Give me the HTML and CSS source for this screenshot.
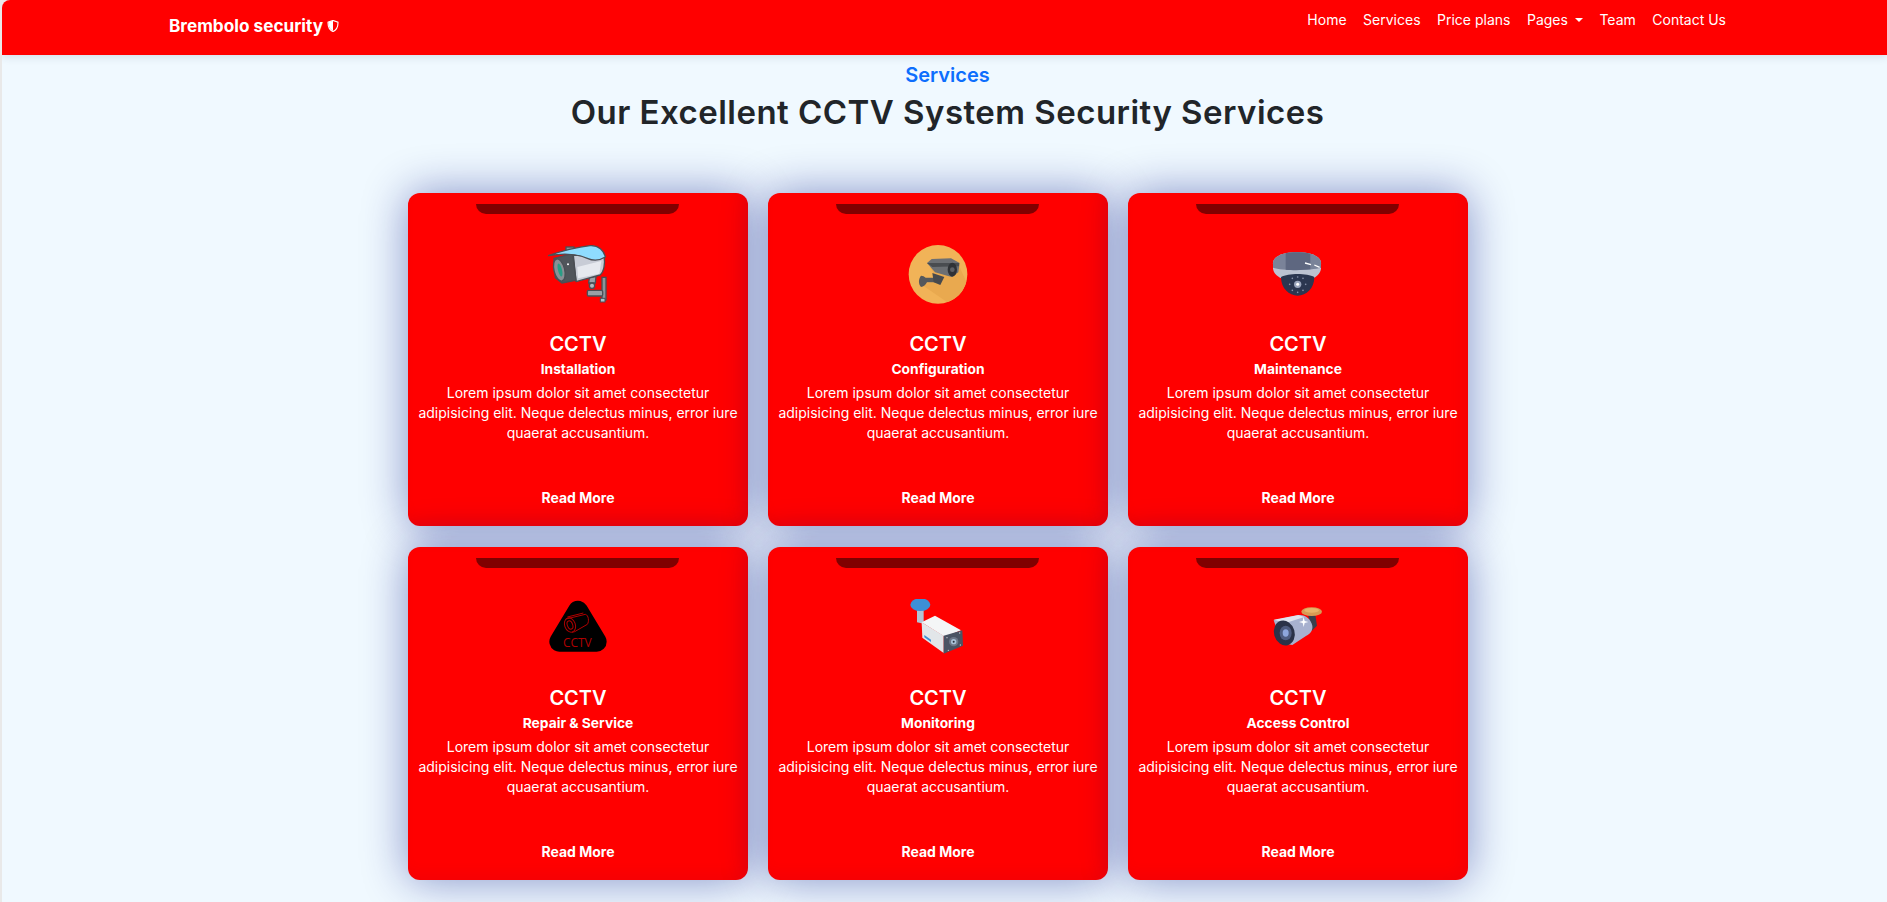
FILE: index.html
```html
<!DOCTYPE html>
<html lang="en">
<head>
<meta charset="utf-8">
<title>Brembolo security</title>
<link rel="stylesheet" href="styles.css">
</head>
<body>
<div class="page">
  <nav class="navbar">
    <a class="brand" href="#">Brembolo security
      <svg class="shield" viewBox="0 0 16 16"><path d="M8 .6 14.600 3c.2 4.800-.8 9.700-6.600 12.400C2.200 12.700 1.200 7.800 1.400 3Z" fill="none" stroke="#fff" stroke-width="1.500"/><path d="M8 1 2 3c0 4.500.8 8.800 6 11.500Z" fill="#fff"/></svg>
    </a>
    <ul class="links">
      <li><a href="#">Home</a></li>
      <li><a href="#">Services</a></li>
      <li><a href="#">Price plans</a></li>
      <li><a href="#">Pages<span class="caret"></span></a></li>
      <li><a href="#">Team</a></li>
      <li><a href="#">Contact Us</a></li>
    </ul>
  </nav>
  <header class="head">
    <h2 class="eyebrow">Services</h2>
    <h1 class="title">Our Excellent CCTV System Security Services</h1>
  </header>
  <main class="grid">
    <article class="card">
      <svg class="icon" viewBox="54 30 180 180">
        <rect x="216" y="127" width="12" height="68" fill="#8d9299" stroke="#4a4f55" stroke-width="4"/>
        <rect x="211" y="190" width="14" height="11" fill="#a8c4d0" stroke="#4a4f55" stroke-width="3"/>
        <rect x="172" y="166" width="46" height="17" rx="4" fill="#9a9fa6" stroke="#4a4f55" stroke-width="4"/>
        <path d="M178 128l-2 16h20l2-20z" fill="#9aa0a8" stroke="#4a4f55" stroke-width="4"/>
        <circle cx="186" cy="152" r="8" fill="#b3b7bd" stroke="#4a4f55" stroke-width="4"/>
        <rect x="108" y="36" width="24" height="14" fill="#8d9299" stroke="#4a4f55" stroke-width="4"/>
        <path d="M130 60 222 62c4 24 0 48-12 58l-72 20z" fill="#c8ccd6" stroke="#4a4f55" stroke-width="4" stroke-linejoin="round"/>
        <path d="M142 96 214 78 208 116 144 130z" fill="#e6e9ef"/>
        <path d="M72 70 128 56 138 136 96 144 76 128z" fill="#50555b" stroke="#4a4f55" stroke-width="4"/>
        <ellipse cx="88" cy="105" rx="16" ry="34" transform="rotate(-14 88 105)" fill="#8a8f95" stroke="#4a4f55" stroke-width="4"/>
        <ellipse cx="90" cy="105" rx="6" ry="20" transform="rotate(-14 90 105)" fill="#2a9d86"/>
        <circle cx="114" cy="88" r="3" fill="#fff"/>
        <path d="M55 62C90 50 130 38 180 32 206 30 222 48 226 66 210 76 190 78 172 70 140 56 100 54 55 62z" fill="#8fdcff" stroke="#4a4f55" stroke-width="4" stroke-linejoin="round"/>
      </svg>
      <h3 class="name">CCTV</h3>
      <h4 class="kind">Installation</h4>
      <p class="text">Lorem ipsum dolor sit amet consectetur adipisicing elit. Neque delectus minus, error iure quaerat accusantium.</p>
      <a class="more" href="#">Read More</a>
    </article>
    <article class="card">
      <svg class="icon" viewBox="39 30 180 180">
        <circle cx="129" cy="118" r="88" fill="#f1b358"/>
        <path d="M108 100 190 88 214 140A88 88 0 0 1 156 201L78 148 128 140z" fill="#e9a94f"/>
        <path d="M78 122c6 0 10 2 14 6h38v14H96c-4 8-10 14-18 14-8-10-8-24 0-34z" fill="#55585c"/>
        <path d="M112 114 148 126 136 150 116 142z" fill="#46494d"/>
        <path d="M96 84 110 72 168 70 194 84 190 112 170 126 120 112z" fill="#6c6f73"/>
        <path d="M96 84 192 84 192 94 112 96z" fill="#494c50"/>
        <ellipse cx="172" cy="104" rx="14" ry="21" fill="#2f3236"/>
        <circle cx="172" cy="104" r="7" fill="#5e6166"/>
      </svg>
      <h3 class="name">CCTV</h3>
      <h4 class="kind">Configuration</h4>
      <p class="text">Lorem ipsum dolor sit amet consectetur adipisicing elit. Neque delectus minus, error iure quaerat accusantium.</p>
      <a class="more" href="#">Read More</a>
    </article>
    <article class="card">
      <svg class="icon" viewBox="39 30 180 180">
        <path d="M54 85C54 65 80 52 126 52 172 52 198 65 198 85V100C198 115 180 130 170 132H86C72 130 54 115 54 100Z" fill="#bcc2d1"/>
        <path d="M54 85C54 65 80 52 126 52 172 52 198 65 198 85V98C170 106 84 108 54 98Z" fill="#7a8399"/>
        <path d="M92 54C110 51 146 51 166 56V103C142 106 112 106 92 104Z" fill="#5e6780"/>
        <path d="M150 84l18 5M178 90l16 7" stroke="#fff" stroke-width="4"/>
        <path d="M78 126C100 114 156 114 178 126 178 160 154 182 128 182 102 182 78 160 78 126Z" fill="#2b3650"/>
        <circle cx="128" cy="148" r="11" fill="#9aa4bc"/>
        <circle cx="128" cy="148" r="4.500" fill="#fff"/>
        <g fill="#8a94ad">
          <circle cx="128" cy="126" r="2.500"/><circle cx="112" cy="130" r="2.500"/><circle cx="144" cy="130" r="2.500"/>
          <circle cx="104" cy="148" r="2.500"/><circle cx="152" cy="148" r="2.500"/><circle cx="112" cy="166" r="2.500"/>
          <circle cx="144" cy="166" r="2.500"/><circle cx="128" cy="172" r="2.500"/>
        </g>
      </svg>
      <h3 class="name">CCTV</h3>
      <h4 class="kind">Maintenance</h4>
      <p class="text">Lorem ipsum dolor sit amet consectetur adipisicing elit. Neque delectus minus, error iure quaerat accusantium.</p>
      <a class="more" href="#">Read More</a>
    </article>
    <article class="card">
      <svg class="icon" viewBox="54 30 180 180">
        <path d="M144 65 88 158H200Z" fill="#000" stroke="#000" stroke-width="60" stroke-linejoin="round"/>
        <g fill="none" stroke="#b00000" stroke-width="3">
          <ellipse cx="120" cy="108" rx="16" ry="22" transform="rotate(-20 120 108)"/>
          <ellipse cx="120" cy="108" rx="8" ry="13" transform="rotate(-20 120 108)"/>
          <path d="M108 90 166 76c10 2 12 22 6 30l-38 22-8 2M112 84 160 72"/>
        </g>
        <text class="icon-label" x="142" y="174" text-anchor="middle">CCTV</text>
      </svg>
      <h3 class="name">CCTV</h3>
      <h4 class="kind">Repair &amp; Service</h4>
      <p class="text">Lorem ipsum dolor sit amet consectetur adipisicing elit. Neque delectus minus, error iure quaerat accusantium.</p>
      <a class="more" href="#">Read More</a>
    </article>
    <article class="card">
      <svg class="icon" viewBox="39 30 180 180">
        <path d="M66 62h20v42l-20-4z" fill="#b4c3d4"/>
        <ellipse cx="76" cy="47" rx="30" ry="19" fill="#3d8fd6"/>
        <path d="M120 80 198 124 150 144 80 100z" fill="#f4f6f7"/>
        <path d="M80 100 146 140 146 192 82 146z" fill="#e2e6e9"/>
        <path d="M88 138l20 14v7l-20-14z" fill="#3d8fd6"/>
        <path d="M146 140 202 124 204 170 146 194z" fill="#4b5464"/>
        <circle cx="176" cy="158" r="14" fill="#6d7788"/>
        <circle cx="176" cy="158" r="8" fill="#a9c2d8"/>
        <circle cx="176" cy="158" r="3" fill="#27303d"/>
        <g fill="#c8ccd4"><circle cx="156" cy="146" r="2"/><circle cx="194" cy="132" r="2"/><circle cx="196" cy="168" r="2"/><circle cx="160" cy="184" r="2"/></g>
      </svg>
      <h3 class="name">CCTV</h3>
      <h4 class="kind">Monitoring</h4>
      <p class="text">Lorem ipsum dolor sit amet consectetur adipisicing elit. Neque delectus minus, error iure quaerat accusantium.</p>
      <a class="more" href="#">Read More</a>
    </article>
    <article class="card">
      <svg class="icon" viewBox="39 30 180 180">
        <path d="M158 72h22l6 38-16 16z" fill="#3a3f4c"/>
        <ellipse cx="170" cy="68" rx="31" ry="13" fill="#d89a54"/>
        <ellipse cx="170" cy="64" rx="22" ry="7" fill="#e8b36a"/>
        <path d="M56 94 132 78c18-2 36 12 40 32 2 14-6 24-18 30l-42 28-32-6z" fill="#a8b1cf"/>
        <path d="M56 92 130 78 148 84 92 102z" fill="#e0e4ee"/>
        <ellipse cx="88" cy="132" rx="31" ry="38" transform="rotate(-16 88 132)" fill="#2b3248"/>
        <ellipse cx="92" cy="132" rx="18" ry="22" fill="#4f5c80"/>
        <ellipse cx="92" cy="132" rx="9" ry="11" fill="#8ea6dc"/>
        <path d="M146 84 149 96 160 99 149 102 146 114 143 102 132 99 143 96z" fill="#fff"/>
      </svg>
      <h3 class="name">CCTV</h3>
      <h4 class="kind">Access Control</h4>
      <p class="text">Lorem ipsum dolor sit amet consectetur adipisicing elit. Neque delectus minus, error iure quaerat accusantium.</p>
      <a class="more" href="#">Read More</a>
    </article>
  </main>
</div>
</body>
</html>
```

FILE: styles.css
```css
* { box-sizing: border-box; }
html, body { margin: 0; height: 100%; overflow: hidden; background: #e9e9e9; }
body { font-family: Inter, "Noto Sans", sans-serif; color: #212529; }
a { color: inherit; text-decoration: none; }
ul { list-style: none; margin: 0; padding: 0; }

.page {
  margin-left: 2px;
  height: 902px;
  background: #f0f9ff;
  border-radius: 8px 0 0 0;
  overflow: hidden;
}

.navbar {
  height: 55px;
  background: #f00;
  color: #fff;
  display: flex;
  justify-content: space-between;
  align-items: flex-start;
  padding: 0 161px 0 167px;
  box-shadow: 0 2px 8px rgba(40, 60, 90, .14);
}
.brand {
  margin-top: 15px;
  font-size: 17.200px;
  font-weight: 700;
  line-height: 22px;
  display: flex;
  align-items: center;
  gap: 4px;
}
.shield { width: 12px; height: 12px; }
.links { display: flex; gap: 16.500px; margin-top: 9px; font-size: 14px; line-height: 21px; }
.caret {
  display: inline-block;
  margin-left: 7px;
  vertical-align: 3px;
  border-top: 4.500px solid #fff;
  border-left: 4.500px solid transparent;
  border-right: 4.500px solid transparent;
}

.head { padding-left: 6px; text-align: center; }
.eyebrow { margin: 8px 0 0; font-size: 20px; line-height: 24px; font-weight: 600; color: #0d6efd; }
.title { margin: 1px 0 0; font-size: 33px; line-height: 48px; font-weight: 600; letter-spacing: .47px; }

.grid {
  margin: 57px 0 0 406px;
  width: 1060px;
  display: grid;
  grid-template-columns: repeat(3, 340px);
  grid-auto-rows: 333px;
  column-gap: 20px;
  row-gap: 21px;
}

.card {
  position: relative;
  display: flex;
  flex-direction: column;
  align-items: center;
  padding: 52px 8px 18px;
  background: #f00;
  color: #fff;
  text-align: center;
  border-radius: 12px;
  box-shadow: 0 0 45px rgba(0, 20, 130, .46), inset -6px -6px 14px rgba(120, 0, 60, .08);
}
.card::before {
  content: "";
  position: absolute;
  top: 11px;
  left: 68px;
  width: 203px;
  height: 10px;
  background: #800000;
  border-radius: 0 0 10px 10px;
}
.icon { width: 60px; height: 60px; flex: none; }
.icon-label { font-family: "Open Sans", sans-serif; font-size: 36px; fill: #b00000; }
.name { margin: 25px 0 0; font-size: 20px; line-height: 28px; font-weight: 600; }
.kind { margin: 1px 0 0; font-size: 13.800px; line-height: 20px; font-weight: 700; }
.text { margin: 4px 0 0; font-size: 14px; line-height: 20px; }
.more { margin-top: auto; font-size: 14px; line-height: 20px; font-weight: 700; }
```
